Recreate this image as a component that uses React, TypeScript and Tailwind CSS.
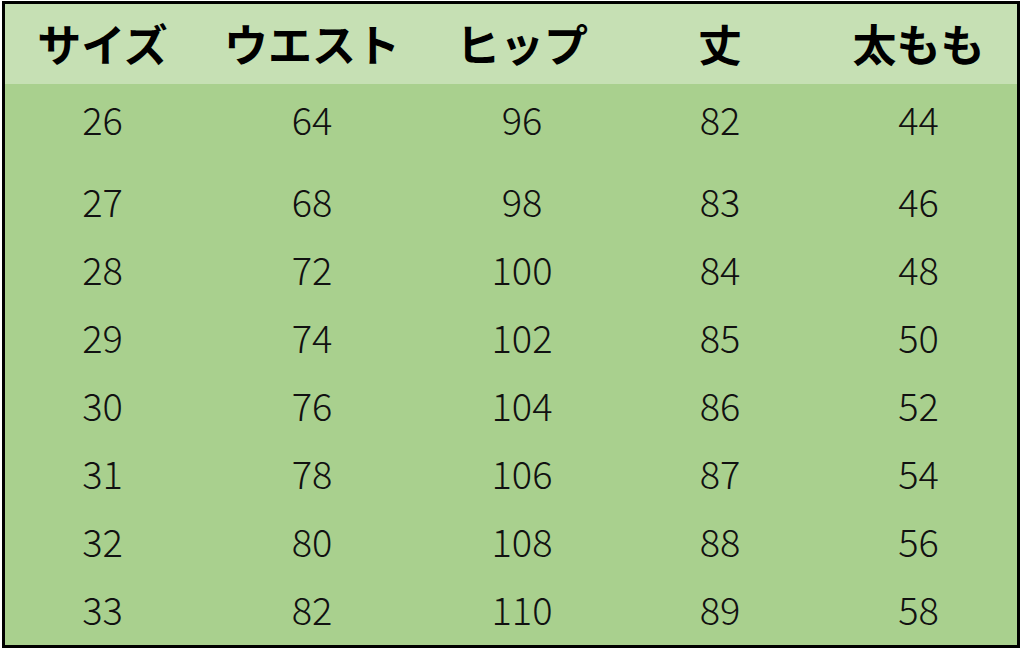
import React from 'react';

const headers = ['サイズ', 'ウエスト', 'ヒップ', '丈', '太もも'];

const rows = [
  [26, 64, 96, 82, 44],
  [27, 68, 98, 83, 46],
  [28, 72, 100, 84, 48],
  [29, 74, 102, 85, 50],
  [30, 76, 104, 86, 52],
  [31, 78, 106, 87, 54],
  [32, 80, 108, 88, 56],
  [33, 82, 110, 89, 58],
];

const cols = 'grid grid-cols-[195px_224px_196px_200px_1fr]';

const App: React.FC = () => {
  return (
    <div
      className="w-[1024px] h-[649px] bg-white pl-[2px] pt-[1px] overflow-hidden"
      style={{ fontFamily: '"Noto Sans CJK JP", "Noto Sans", sans-serif' }}
    >
      <div className="w-[1018px] h-[647px] border-[3px] border-black flex flex-col bg-[#a9d08e]">
        {/* Header */}
        <div className={`${cols} h-[80px] bg-[#c6e0b4] items-center shrink-0 pb-[2px]`}>
          {headers.map(h => (
            <div key={h} className="text-center text-[44px] font-bold text-black leading-none">
              {h}
            </div>
          ))}
        </div>

        {/* Body */}
        {rows.map((row, i) => (
          <div
            key={row[0]}
            className={`${cols} items-center shrink-0 ${i === 0 ? 'h-[86px] pb-[16px]' : 'h-[68px] pb-[6px]'}`}
          >
            {row.map((v, j) => (
              <div
                key={j}
                className="text-center text-[38px] font-light text-[#111] leading-none"
              >
                {v}
              </div>
            ))}
          </div>
        ))}
      </div>
    </div>
  );
};

export default App;
